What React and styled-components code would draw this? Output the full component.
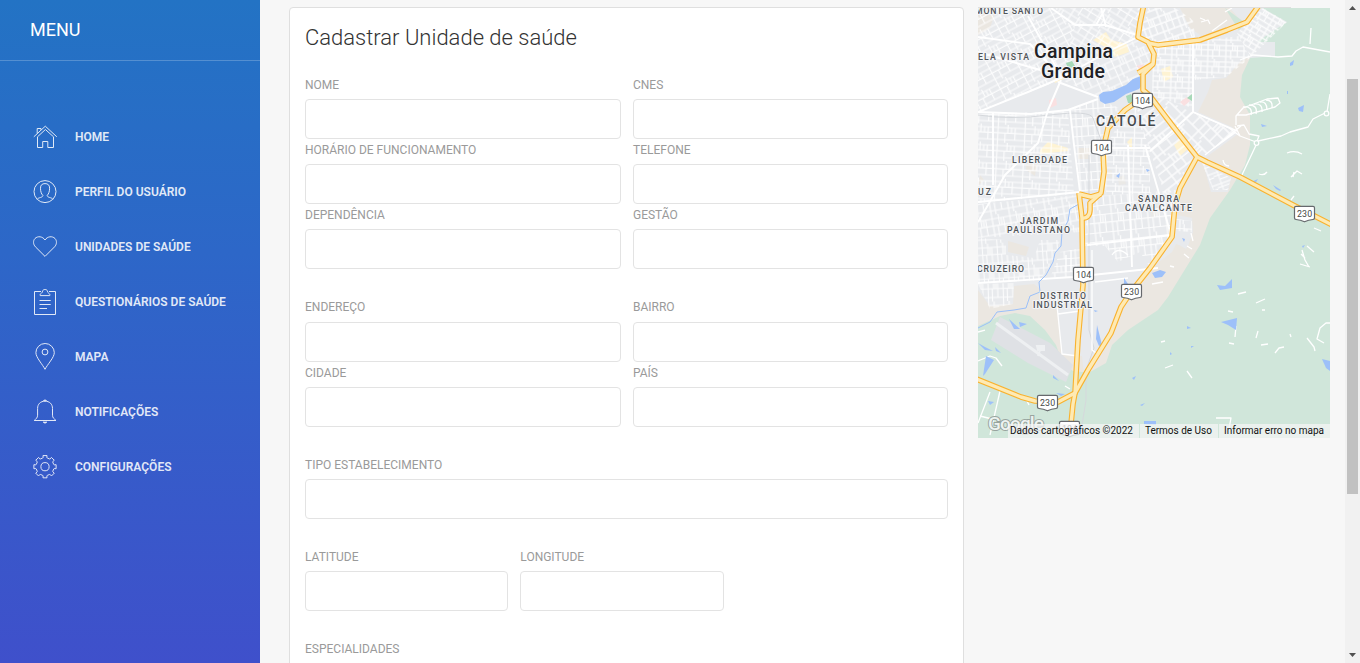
import React from "react";
import styled, { createGlobalStyle } from "styled-components";

const GlobalStyle = createGlobalStyle`
  *, *::before, *::after { box-sizing: border-box; }
  html, body { margin: 0; height: 100%; overflow: hidden; }
  body { font-family: Roboto, "Liberation Sans", sans-serif; background: #f7f7f7; color: #333; }
`;

const Page = styled.div`
  display: flex;
  height: 663px;
  overflow: hidden;
`;

const Sidebar = styled.aside`
  flex: 0 0 260px;
  background: linear-gradient(180deg, #2373c4 0%, #2d67c8 38%, #3f50cb 100%);
`;

const Brand = styled.div`
  height: 61px;
  padding: 15px 30px;
  border-bottom: 1px solid rgba(255, 255, 255, 0.22);
  font-size: 18px;
  line-height: 30px;
  color: #fff;
`;

const Nav = styled.nav`
  display: flex;
  flex-direction: column;
  gap: 25px;
  padding: 61px 30px 0;
`;

const NavItem = styled.a`
  display: flex;
  align-items: center;
  gap: 15px;
  height: 30px;
  font-size: 12px;
  font-weight: 600;
  line-height: 30px;
  white-space: nowrap;
  text-transform: uppercase;
  color: #fff;
  opacity: 0.86;
`;

const NavIcon = styled.svg`
  flex: none;
  width: 30px;
  height: 30px;
  fill: none;
  stroke: #fff;
  stroke-width: 1;
`;

const Content = styled.main`
  flex: 1;
  display: flex;
  align-items: flex-start;
  gap: 14px;
  padding: 7px 15px 0 29px;
`;

const Card = styled.section`
  width: 675px;
  height: 720px;
  padding: 15px 15px;
  background: #fff;
  border: 1px solid #dfdfdf;
  border-radius: 4px;
`;

const Title = styled.h4`
  margin: 0 0 21px;
  font-size: 22px;
  font-weight: 300;
  line-height: 30px;
  color: #333;
`;

const Group = styled.div`
  display: grid;
  grid-template-columns: ${(p) => p.$columns};
  column-gap: 12px;
  margin-bottom: ${(p) => p.$after || 27}px;
`;

const Field = styled.label`
  display: flex;
  flex-direction: column;
  font-size: 12px;
  line-height: 20px;
  text-transform: uppercase;
  color: #9a9a9a;
  padding-top: ${(p) => p.$drop}px;
`;

const Input = styled.input`
  width: 100%;
  height: 40px;
  margin-top: ${(p) => p.$space}px;
  padding: 8px 12px;
  border: 1px solid #e3e3e3;
  border-radius: 4px;
  background: #fff;
  outline: none;
`;

const MapColumn = styled.div`
  width: 352px;
`;

const MapTopRule = styled.div`
  width: 313px;
  height: 1px;
  background: #dfdfdf;
`;

const MapFrame = styled.div`
  position: relative;
  height: 430px;
  overflow: hidden;
`;

const MapSvg = styled.svg`
  display: block;
  width: 352px;
  height: 430px;
  font-family: Roboto, sans-serif;
`;

const Attribution = styled.div`
  position: absolute;
  right: 0;
  bottom: 0;
  display: flex;
  height: 14px;
  font-size: 10px;
  line-height: 14px;
  white-space: nowrap;
  color: #111;
`;

const Legal = styled.span`
  padding: 0 6px 0 ${(p) => p.$left || 6}px;
  background: rgba(245, 245, 245, 0.72);
  margin-left: ${(p) => p.$gap || 0}px;
`;

const Scrollbar = styled.div`
  flex: 0 0 15px;
  display: flex;
  flex-direction: column;
  align-items: center;
  justify-content: space-between;
  background: #f1f1f1;
`;

const ScrollArrow = styled.svg`
  width: 15px;
  height: 15px;
  fill: #505050;
`;

const ScrollThumb = styled.div`
  width: 11px;
  height: 415px;
  margin: 0 0 90px;
  background: #c1c1c1;
`;

const gearPath = (() => {
  const pts = [];
  for (let i = 0; i < 8; i++) {
    const a = (i * Math.PI) / 4;
    [[-0.25, 9], [-0.2, 9.4], [-0.18, 11.3], [0.18, 11.3], [0.2, 9.4], [0.25, 9]].forEach(([d, r]) =>
      pts.push(`${(15 + r * Math.sin(a + d)).toFixed(2)} ${(14.7 - r * Math.cos(a + d)).toFixed(2)}`)
    );
  }
  return `M${pts.join("L")}Z`;
})();

const menu = [
  ["Home", <><path d="M3.8 14.8L15.3 4.2 26.8 14.8M7.2 11.5V6.5H11V8" /><path d="M7.5 14.8V25.5H12.7V19.5H17.8V25.5H23.5V14.8L15.4 7.5Z" /></>],
  ["Perfil do Usuário", <><circle cx="15" cy="14.6" r="11" /><path d="M7.2 22.3C8.1 20.3 13 20.8 12.9 18.4 11.2 16.9 10.5 14.1 10.5 11.2 10.5 8 12.1 6.6 15 6.6S19.6 8 19.6 11.2C19.6 14.1 18.8 16.9 17.2 18.4 17.1 20.8 22 20.3 22.9 22.3" /></>],
  ["Unidades de Saúde", <path d="M15 24.4L5.4 14.8C3.1 12.4 2.9 8.7 5 6.5 7.8 3.7 12.6 4.3 15 8 17.4 4.3 22.2 3.7 25 6.5 27.1 8.7 26.9 12.4 24.6 14.8Z" />],
  ["Questionários de Saúde", <><path d="M11 4.5H4.5V27.5H25.5V4.5H19" /><path d="M10.2 8.6V7.4C10.5 6.1 12.4 6.4 12.6 4.1 12.8 2 17.2 2 17.4 4.1 17.6 6.4 19.5 6.1 19.8 7.4V8.6ZM9.5 13.5H20.7M9.5 17.5H20.7M9.5 21.5H17" /></>],
  ["Mapa", <><path d="M15 27.3C12.8 22.7 5.9 15.5 5.9 10.7A9.2 9.2 0 0 1 24.3 10.7C24.3 15.5 17.2 22.7 15 27.3Z" /><circle cx="15" cy="10" r="2.9" /></>],
  ["Notificações", <><path d="M4.2 23.5C6 21.8 7.6 20.9 7.6 18.2V11.5C7.6 7 10.5 4.2 15 4.2S22.5 7 22.5 11.5V18.2C22.5 20.9 24.2 21.8 26 23.5Z" /><path d="M13.3 3.7Q15 1.8 16.7 3.7ZM13 25H17Q15 27.6 13 25Z" fill="#fff" strokeWidth=".6" /></>],
  ["Configurações", <><path d={gearPath} strokeLinejoin="round" /><circle cx="15" cy="14.7" r="4.1" /></>],
];

/* Street grids: id, angle, cell width, cell height, street width, district outline */
const districts = [
  ["a", -28, 9, 6, 1.2, "978,8 1054,8 1075,26 1061,80 978,112"],
  ["b", 32, 8, 6, 1.2, "1054,8 1143,8 1137,38 1111,50 1062,78 1074,26"],
  ["c", -24, 7, 8, 1.2, "1062,80 1137,39 1152,54 1143,78 1098,96"],
  ["d", 3, 9, 6, 1.2, "978,114 1068,111 1074,194 978,203"],
  ["e", -4, 6, 9, 1.2, "1070,110 1098,99 1124,110 1102,140 1101,190 1080,192"],
  ["f", -10, 6, 8, 1.2, "978,204 1079,195 1081,232 978,238"],
  ["g", -4, 5, 8, 1.1, "978,238 1006,240 1006,255 1034,258 1040,240 1060,240 1055,258 1040,280 978,283"],
  ["h", 2, 9, 6, 1.2, "1127,111 1136,106 1150,151 1150,193 1106,195 1103,150"],
  ["q", -38, 10, 8, 1.4, "1136,106 1150,104 1194,155 1176,190 1165,195 1150,151"],
  ["i", -6, 6, 9, 1.2, "1087,197 1176,190 1171,239 1150,267 1140,252 1118,262 1105,246 1085,246"],
  ["r", -4, 10, 7, 1.1, "1060,252 1081,248 1081,276 1050,278"],
  ["j", -20, 6, 8, 1.4, "1148,8 1175,8 1193,20 1195,37 1151,44 1140,34"],
  ["k", 2, 6, 5.5, 1.3, "1153,47 1239,36 1250,58 1226,77 1193,80 1193,108 1152,96"],
  ["l", 31, 6, 5, 1.3, "1237,33 1263,8 1287,22 1251,57"],
  ["m", 45, 8, 10, 1.4, "1158,96 1193,113 1237,132 1205,155 1198,156 1152,98"],
  ["n", 70, 4, 10, 1.2, "1202,163 1231,178 1228,190 1213,190"],
  ["p", -2, 5, 8, 1.1, "978,284 1014,283 1013,304 990,309"],
  ["s", 3, 4, 9, 1.2, "1176,219 1192,221 1192,232 1176,231"],
];

const avenues = [
  "M978 112L1028 92 1061 78 1111 50 1138 37",
  "M1051 8L1075 25 1105 25 1137 35",
  "M1101 8L1106 27M1096 25L1105 9",
  "M1058 82L1098 97M978 112L1031 114 1068 110 1098 99",
  "M1061 80L1048 110 1038 143 1005 175 988 205 978 222",
  "M1070 110L1074 145 1080 192M993 112V185",
  "M978 202L1080 192M978 283L1073 277 1158 268",
  "M978 37L1030 44 1062 78M978 52L1040 70M1028 16L1062 78",
  "M1193 40V112L1237 131M1193 112L1150 151",
  "M1128 145L1132 267M1145 145L1171 235M1102 148H1150M1087 245L1172 235",
];

const minorRoads = [
  "M1056 296L1062 354 1078 356M1092 250V350L1096 353M1058 314L1080 311M1095 282L1128 278",
  "M1112 255Q1118 246 1128 255M1066 255V272M1071 250V272",
];

const highways = [
  "M1144 4L1140 23 1138 37 1148 42 1154 54 1153 64 1143 74 1143 90 1150 96 1172 125 1197 157 1207 162 1240 177 1293 205 1334 226",
  "M1148 43L1158 45 1200 40 1227 30 1247 22 1260 4",
  "M1138 73L1153 64M1148 94L1125 110 1108 128 1103 150 1104 172 1101 193 1090 203V210C1090 215 1087 219 1082 218",
  "M1079 194L1091 197 1101 194M1079 193L1082 218 1083 285 1078 340 1075 393 1073 404 1070 434",
  "M1197 157L1180 188 1175 205 1172 237 1150 268 1131 292 1121 307 1111 333 1088 370 1075 393 1058 402 1035 401 1021 397 974 378",
];

const ponds = [
  "1099,95 1103,92 1112,91 1126,85 1133,79 1141,76 1142,85 1139,89 1126,94 1114,102 1105,104 1100,101",
  "1290,63 1294,60 1293,65 1290,66", "1298,108 1304,105 1303,112 1299,111", "1261,124 1267,126 1262,127",
  "1287,91 1288,91 1288,94 1287,94", "1273,185 1281,190 1280,191 1276,189", "1251,182 1258,179 1256,182",
  "1152,273 1160,270 1166,272 1162,277 1155,278", "1217,285 1225,286 1232,279 1232,288 1220,290",
  "1221,322 1237,318 1236,330 1228,325", "1322,359 1330,361 1330,371 1326,368",
  "1187,326 1191,328 1187,329", "1170,352 1172,354 1170,355", "1191,346 1194,346 1191,348",
  "1097,325 1102,345 1099,346 1096,339", "986,356 994,360 985,374 983,376", "978,343 985,347 993,351 985,350",
  "995,347 1001,353 996,351", "1009,319 1020,329 1014,329", "1019,322 1027,324 1020,327",
  "1053,375 1059,381 1053,378", "1132,378 1136,376 1134,380", "1140,405 1145,403 1142,406",
  "1056,393 1065,394 1061,396", "988,401 994,402 990,405", "1144,421 1156,421 1156,425 1144,424",
  "1116,176 1120,173 1119,178", "1146,169 1150,170 1147,172", "1182,238 1185,239 1184,242", "1302,246 1305,245 1303,248",
  "1124,278 1128,284 1124,285", "1094,310 1098,311 1095,312",
];

const trails = [
  "M1240 60L1253 55 1278 57 1292 56 1296 51 1303 47 1330 52",
  "M1330 94L1327 112 1313 119 1308 127 1290 132 1281 136 1258 141 1241 177",
  "M1193 112L1229 128 1240 136 1256 142M1236 125V116L1243 108 1267 99 1278 98 1280 103 1275 107 1246 115 1237 115",
  "M1237 126L1244 125 1249 134 1259 136 1257 141M1235 126L1240 136M1241 126L1205 155M1236 132L1214 148",
  "M1243 107Q1253 106 1251 115M1249 105Q1258 105 1256 114M1254 104Q1263 103 1262 112M1260 102Q1267 101 1267 110M1266 100Q1273 100 1272 108",
  "M1311 28L1310 44M1287 153Q1295 150 1302 154M1259 174Q1264 176 1267 172M1223 160Q1224 166 1229 166",
  "M1291 177L1297 171 1302 174M1294 172L1293 177M1291 200L1294 196M1314 228L1321 231M1307 246L1314 252",
  "M1302 250L1305 260 1309 267M1300 264L1310 267M1305 258L1301 254",
  "M1238 294L1246 292M1256 303L1265 299M1228 311L1233 312M1262 310H1265M1236 326L1235 337M1229 343L1234 344",
  "M1258 331L1256 338M1261 345L1268 344M1275 353L1279 348 1284 347M1290 334L1291 337M1307 338L1314 347 1315 351",
  "M1330 323H1326L1320 328 1317 339 1324 343M1161 342L1165 341M1165 368L1173 365M1187 371L1192 378M1216 418L1231 418 1228 434",
  "M978 361L990 356 996 358 1002 366M978 332L985 330M990 392L978 423M1000 391L990 435M980 416L992 419M1025 397L1029 405M1065 386L1070 389",
];

const labels = [
  [975, 14, "MONTE SANTO", 68], [978, 60, "ELA VISTA", 51],
  [1012, 163, "LIBERDADE", 55], [978, 195, "UZ", 13],
  [1020, 224, "JARDIM", 38], [1007, 233, "PAULISTANO", 63],
  [1138, 202, "SANDRA", 41], [1125, 211, "CAVALCANTE", 67],
  [977, 272, "CRUZEIRO", 47], [1040, 299, "DISTRITO", 46],
  [1033, 308, "INDUSTRIAL", 59],
];

const shields = [[1142.5, 101, "104"], [1101.5, 148, "104"], [1083.5, 275, "104"], [1131.5, 292, "230"], [1304.5, 214, "230"], [1047.5, 403, "230"], [1069.5, 429, "104"]];

const Shield = ({ x, y, text }) => (
  <g transform={`translate(${x} ${y})`}>
    <path d="M-8.500 -7.700H8.500Q10 -7.700 10 -6.200V4Q10 5.300 8.500 5.500 4 6 0 7.800 -4 6 -8.500 5.500 -10 5.300 -10 4V-6.200Q-10 -7.700 -8.500 -7.700Z" fill="#fff" stroke="#66696d" strokeWidth="1.200" strokeLinejoin="round" />
    <text x="0.100" y="3.200" fontSize="8.800" textAnchor="middle" fill="#444746" letterSpacing=".2">{text}</text>
  </g>
);

const CityMap = () => (
  <MapSvg viewBox="978 8 352 430">
    <defs>
      {districts.map(([id, angle, w, h, s]) => (
        <pattern key={id} id={`grid-${id}`} width={w * 3} height={h * 3} patternUnits="userSpaceOnUse" patternTransform={`rotate(${angle})`}>
          <path
            d={`M0 ${h * 0.5}H${w * 3}M0 ${h * 1.4}H${w * 3}M0 ${h * 2.5}H${w * 3}M${w * 0.5} 0V${h * 3}M${w * 1.6} 0V${h * 1.4}M${w * 1.3} ${h * 1.4}V${h * 3}M${w * 2.4} ${h * 0.5}V${h * 2.5}M${w * 2} ${h * 0.5}V${h * 1.4}`}
            fill="none" stroke="#fff" strokeWidth={s} opacity=".85"
          />
        </pattern>
      ))}
    </defs>
    <rect x="978" y="8" width="352" height="430" fill="#e8eaed" />
    <g fill="#ebe7e1">
      <path d="M1180 8H1230L1242 22 1225 30 1203 37 1190 28ZM978 10L995 13 990 28 978 35Z" />
      <path d="M1250 56L1240 62 1226 78 1212 80 1208 92 1198 112 1232 127 1238 134 1205 158 1198 160 1182 190 1177 215 1192 218 1193 232 1188 246 1176 244 1172 252 1152 267 1132 292 1122 307 1112 333 1090 370 1100 390 1200 300 1300 150V56Z" />
      <path d="M978 290L990 306 1013 304 1014 286 1034 284 1046 294 1056 296 1062 354 1082 356 1084 374 1060 390 978 390Z" />
      <path d="M1008 241L1029 247 1026 256 1008 252ZM1078 148H1090V159H1078ZM1027 158L1037 163 1035 176 1026 170ZM980 175L984 180 978 186Z" />
      <path d="M1148 206L1156 204 1160 214 1152 218ZM1106 170L1112 170 1112 178 1106 178ZM1118 178L1124 175 1126 184 1119 185Z" opacity=".6" />
    </g>
    <path d="M1178 236H1191L1186 249 1174 242ZM1203 163L1231 178 1228 192H1211Z" fill="#e8eaed" />
    <path d="M1225 8L1244 22 1252 28 1264 8H1330V438H978V326L1000 316 1015 313 1030 316 1045 330 1056 345 1062 362 1073 371 1082 372 1090 372 1106 363 1112 345 1128 330 1158 310 1168 297 1200 245 1210 218 1230 190 1245 165 1250 145V115L1240 97 1242 75 1250 58 1256 42 1240 32Z" fill="#d0e6da" />
    <path d="M1262 8L1287 22 1257 42H1275V56L1250 58 1236 33Z" fill="#e8eaed" />
    <path d="M1000 317L1050 343 1073 365 1066 382 1028 363 991 340Z" fill="#dfe1e5" />
    <path d="M996 323L1068 375" stroke="#eef0f2" strokeWidth="3" />
    <path d="M1037 346H1044V350H1038ZM1040 350L1038 356" stroke="#eef0f2" strokeWidth="2" fill="#eef0f2" />
    <g fill="#fef3d3">
      <path d="M1093 40L1106 32 1111 40 1127 44 1129 52 1115 57 1103 46ZM1040 150L1048 142 1068 148V151L1040 154ZM1161 69L1170 66 1173 77 1164 82ZM1174 145L1180 139 1188 149 1180 156Z" />
      <path d="M1053 80L1062 75 1064 79 1055 83ZM1127 142L1132 137 1132 151Z" />
    </g>
    {districts.map(([id, , , , , outline]) => <polygon key={id} points={outline} fill={`url(#grid-${id})`} />)}
    <path d="M1049 100L1056 98 1057 105 1050 108ZM1136 66L1144 64 1142 71ZM1180 102L1187 97 1190 101 1184 106Z" fill="#fae0e1" />
    <path d="M1066 63L1072 61 1075 66 1068 69ZM1126 96L1131 94 1134 103 1128 103ZM1187 98L1192 94V101Z" fill="#a7d9b8" />
    <g fill="none" stroke="#d5d8dc" strokeWidth="1">
      <path d="M978 115Q1010 120 1050 115T1093 118L1101 140" />
      <path d="M1089 155V330L1094 348 1086 370V400L1080 438" />
    </g>
    <g fill="none" stroke="#fff" strokeWidth="1.900" strokeLinejoin="round">
      {avenues.map((d) => <path key={d} d={d} />)}
    </g>
    <g fill="none" stroke="#fff" strokeWidth="1.300" strokeLinejoin="round">
      {minorRoads.map((d) => <path key={d} d={d} />)}
      {trails.map((d) => <path key={d} d={d} />)}
      <circle cx="1326.500" cy="113.500" r="2.300" fill="#d0e6da" />
      <circle cx="1256.500" cy="143" r="2.300" fill="#d0e6da" />
      <path d="M1191 233L1193 241M1187 246L1192 249M1184 254L1189 258M1170 266L1174 267M1152 284L1163 282" />
      <path d="M1201 22L1208 20 1210 24M1205 20L1200 18M1212 31L1227 20M1225 12L1232 8" />
    </g>
    <path d="M1079 204L1070 209 1068 221 1062 232 1061 246 1055 253 1053 262 1046 275 1039 282 1040 292 1030 296 1026 308 1014 310 997 312 990 322 978 328" fill="none" stroke="#9bc0f9" strokeWidth="1" />
    {ponds.map((points) => <polygon key={points} points={points} fill="#9dc0f9" />)}
    <g fill="none" strokeLinejoin="round" strokeWidth="5.600" stroke="#f9b22e">
      {highways.map((d) => <path key={d} d={d} />)}
    </g>
    <g fill="none" strokeLinejoin="round" strokeWidth="3.400" stroke="#feeab4">
      {highways.map((d) => <path key={d} d={d} />)}
    </g>
    {shields.map(([x, y, text]) => <Shield key={`${x}-${y}`} x={x} y={y} text={text} />)}
    <g fill="#505458" stroke="#f4f5f7" strokeWidth="2" strokeLinejoin="round" paintOrder="stroke" fontWeight="500">
      {labels.map(([x, y, text, width]) => <text key={text} x={x} y={y} fontSize="8.700" textLength={width}>{text}</text>)}
      <text x="1096" y="126" fontSize="14" textLength="59.500" fill="#45494d">CATOLÉ</text>
      <g fill="#202124" fontSize="19.500">
        <text x="1034" y="58" textLength="79">Campina</text>
        <text x="1041" y="78" textLength="64">Grande</text>
      </g>
    </g>
    <text x="988" y="430" fontSize="19" fontWeight="500" textLength="56" fill="#edf3f0" stroke="#98a49f" strokeWidth="2" paintOrder="stroke">Google</text>
  </MapSvg>
);

/* The first row of a raised group keeps its caption one pixel higher */
const fields = (names, raised) => names.map((name, i) => {
  const drop = raised && i < 2 ? 0 : 1;
  return <Field key={name} $drop={drop}>{name}<Input $space={5 - drop} /></Field>;
});

export default function App() {
  return (
    <>
      <GlobalStyle />
      <Page>
        <Sidebar>
          <Brand>MENU</Brand>
          <Nav>
            {menu.map(([name, drawing]) => (
              <NavItem key={name}><NavIcon viewBox="0 0 30 30">{drawing}</NavIcon>{name}</NavItem>
            ))}
          </Nav>
        </Sidebar>
        <Content>
          <Card>
            <Title>Cadastrar Unidade de saúde</Title>
            <Group $columns="316px 315px" $after={28}>
              {fields(["Nome", "CNES", "Horário de funcionamento", "Telefone", "Dependência", "Gestão"])}
            </Group>
            <Group $columns="316px 315px">
              {fields(["Endereço", "Bairro", "Cidade", "País"], true)}
            </Group>
            <Group $columns="643px">{fields(["Tipo Estabelecimento"])}</Group>
            <Group $columns="203.300px 203.400px">{fields(["Latitude", "Longitude"])}</Group>
            <Group $columns="643px">{fields(["Especialidades"])}</Group>
          </Card>
          <MapColumn>
            <MapTopRule />
            <MapFrame>
              <CityMap />
              <Attribution>
                <Legal $left={2}>Dados cartográficos ©2022</Legal>
                <Legal $gap={1} $left={5}>Termos de Uso</Legal>
                <Legal $gap={1} $left={5}>Informar erro no mapa</Legal>
              </Attribution>
            </MapFrame>
          </MapColumn>
        </Content>
        <Scrollbar>
          <ScrollArrow viewBox="0 0 15 15"><path d="M4 10L7.500 6 11 10Z" /></ScrollArrow>
          <ScrollThumb />
          <ScrollArrow viewBox="0 0 15 15"><path d="M4 5H11L7.500 9Z" /></ScrollArrow>
        </Scrollbar>
      </Page>
    </>
  );
}
